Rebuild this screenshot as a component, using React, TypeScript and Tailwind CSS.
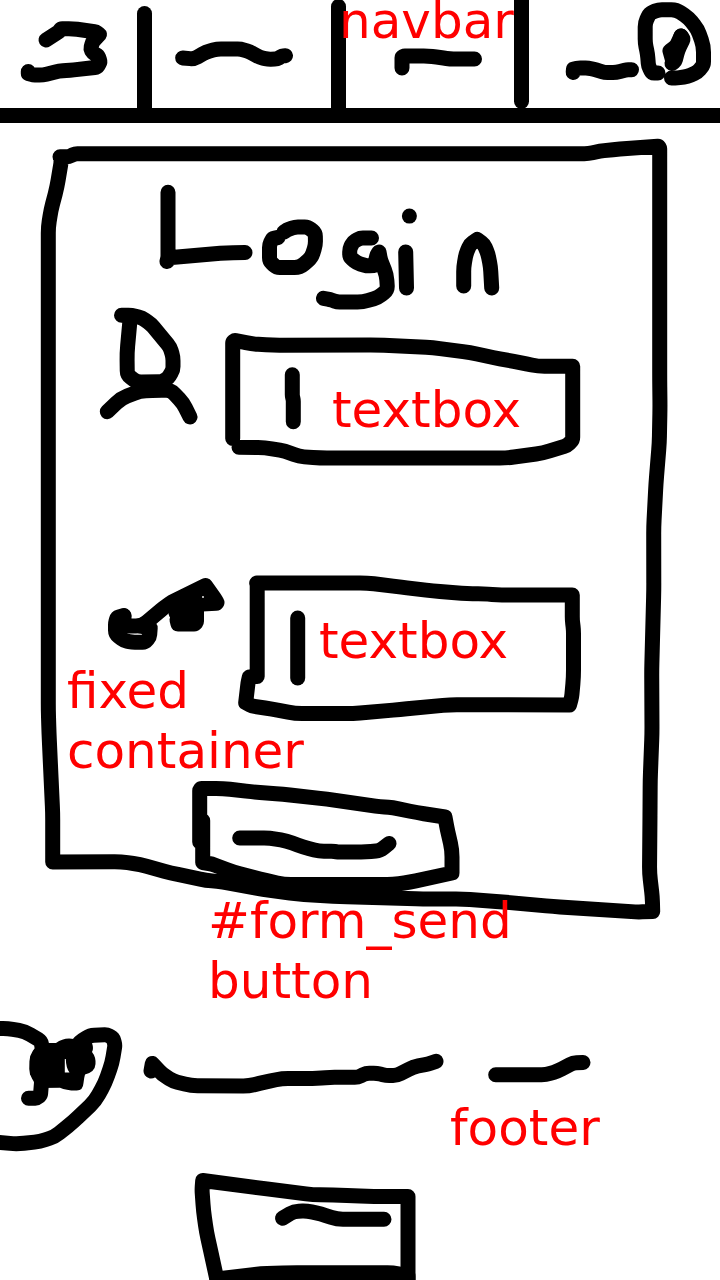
import type { ReactNode } from 'react';

type Point = [number, number];

const parse = (line: string): Point[] =>
  line.split(' ').map((pair) => pair.split(',').map(Number) as Point);

// Straight runs with gently rounded bends; sharp corners stay sharp.
function toPath(line: string): string {
  const pts = parse(line);
  let d = `M${pts[0][0]} ${pts[0][1]}`;
  for (let i = 1; i < pts.length - 1; i++) {
    const [a, b, c] = [pts[i - 1], pts[i], pts[i + 1]];
    const inLen = Math.hypot(b[0] - a[0], b[1] - a[1]) || 1;
    const outLen = Math.hypot(c[0] - b[0], c[1] - b[1]) || 1;
    const u: Point = [(b[0] - a[0]) / inLen, (b[1] - a[1]) / inLen];
    const v: Point = [(c[0] - b[0]) / outLen, (c[1] - b[1]) / outLen];
    const gentle = u[0] * v[0] + u[1] * v[1] > 0.4;
    const r = gentle ? Math.min(inLen * 0.35, outLen * 0.35, 7) : 0;
    d += `L${b[0] - u[0] * r} ${b[1] - u[1] * r}Q${b[0]} ${b[1]} ${b[0] + v[0] * r} ${b[1] + v[1] * r}`;
  }
  const end = pts[pts.length - 1];
  return `${d}L${end[0]} ${end[1]}`;
}

type SketchProps = { box: string; className: string; lines: string[]; children?: ReactNode };

function Sketch({ box, className, lines, children }: SketchProps) {
  return (
    <svg
      viewBox={box}
      className={`shrink-0 overflow-visible ${className}`}
      fill="none"
      stroke="black"
      strokeWidth={15}
      strokeLinecap="round"
      strokeLinejoin="round"
      aria-hidden="true"
    >
      {lines.map((line) => (
        <path key={line} d={toPath(line)} />
      ))}
      {children}
    </svg>
  );
}

function Note({
  className = '',
  leading = 'leading-[60px]',
  children,
}: {
  className?: string;
  leading?: string;
  children: ReactNode;
}) {
  return (
    <p
      className={`relative z-10 whitespace-nowrap font-['DejaVu_Sans',sans-serif] text-[50px] text-[#ff0000] ${leading} ${className}`}
    >
      {children}
    </p>
  );
}

function Navbar() {
  return (
    <header className="flex h-[123px] border-b-[15px] border-black">
      <Sketch
        box="0 0 137 108"
        className="h-[108px] w-[137px]"
        lines={[
          '46,40 59,31.5 61,28.7 73,28.7 96,32 99.5,34.5 92.5,42 90.7,49 93,53 98,55.5 100.3,62 97,67.3 70,70.3 59,71 43,75 33,75 28.3,73.5 28.3,71.5',
        ]}
      />
      <span className="mt-[6px] h-[109px] w-[15px] shrink-0 rounded-full bg-black" />
      <Sketch
        box="152 0 179 108"
        className="h-[108px] w-[179px]"
        lines={['182.7,58 194,59 206,52 217,49 241,49 250,52 260,57.5 268,59.2 277,59 282,56 285.5,55.7']}
      />
      <span className="-mt-px h-[116px] w-[15px] shrink-0 rounded-full bg-black" />
      <div className="flex h-[108px] w-[167.5px] shrink-0 flex-col">
        <Note className="-ml-[7px] -mt-[9px]">navbar</Note>
        <Sketch
          box="346 51 167.5 57"
          className="h-[57px] w-[167.5px]"
          lines={['402,68 402,57 404,56 428,56 440,57.5 450,59 474.5,59']}
        />
      </div>
      <span className="-mt-[8px] h-[117px] w-[15px] shrink-0 rounded-full bg-black" />
      <Sketch
        box="528.5 0 191.5 108"
        className="h-[108px] w-[191.5px]"
        lines={[
          '572.7,72.5 573,69 578,68 588,68 596,70 604,72.5 616,72.5 626,69.8 631,69.7',
          '657.5,73 651.5,73 648,66 647,54 644.7,43 644.7,23 649,13.5 658,9.7 676,9.7 688,18 697,29 703,46 703,65 697,72 687,76.5 677,78 671,78',
          '680.5,36 682.7,39 677.5,50 674.5,61 671.5,63.5',
          '680.5,36 676,46 669.5,51 672,60',
        ]}
      />
    </header>
  );
}

function LoginCard() {
  return (
    <section className="relative ml-10 mt-4 flex h-[749px] w-[628px] flex-col">
      <Sketch
        box="40 139 628 779"
        className="absolute left-0 top-0 h-[779px] w-[628px]"
        lines={[
          '60,156.7 69,156.7 75,153.7 588.5,153.7 600,151 620,149 658.5,146.2 659.7,148 659.7,380 660,407 659.3,443 656,483 653.7,527 653.8,590 651.7,670 652,733 650.2,780 650,813 649.5,873 652.3,897 652.7,911.5 637,912 553,906.5 503,902 463,899 423,899 340,896.6 297,894 263,889.5 223,882 206,880.3 171,873 140,864.5 121,861.7 52.7,862 52.7,813 50.7,770 49,733 48.3,710 48.3,227 51,210 57,187 61,163 61,157',
        ]}
      />

      <h1 className="ml-[120px] mt-[46px]" aria-label="Login">
        <Sketch
          box="160 185 340 123"
          className="h-[123px] w-[340px]"
          lines={[
            '168,192.3 168,257 167,261.5 170,257.7 226.7,252.7 245,252.5',
            '278,237.5 272.5,238.5 269.5,245 269.5,261 276.5,267.5 300,267.5 311.5,257.5 315.5,245 315.3,233 308,227 295,226.9 287,230 284,232',
            '371.5,238 360,238 353,242 349.7,249 349.7,257 357,263 367,266 374,265.5',
            '375,263 377,255 379,252 380.5,260 386.5,275 387.5,290 378,297.5 363,301.9 337,301.9 330,299.5 323.5,298.3',
            '405.7,252 406.5,288',
            '409.4,216 409.4,216.1',
            '463.7,286 463.7,267 466,254 470,244.5 477.3,239.5 484,244.5 488,254 490.5,267 491.7,288',
          ]}
        />
      </h1>

      <div className="flex h-[158px] pl-[60px]">
        <Sketch
          box="100 308 100 158"
          className="h-[158px] w-[100px]"
          lines={[
            '121.5,315.3 132,315.3 142,318 151,324 170,347 173,357 173,370 168,378 162,381.7 137,382 127.3,375 127,353 130,320',
            '107.3,411.7 121,398.5 140,391 157,390.3 171,390.3 183,403 190,417',
          ]}
        />
        <div className="relative ml-[25px] w-[356px]">
          <Sketch
            box="225 308 356 158"
            className="absolute inset-0 h-[158px] w-[356px]"
            lines={[
              '232.7,438.5 232.7,342 234.7,340.3 252,344 273,345.2 377,345 433,347.7 470,352.5 493,357.5 520,362.5 538,366.3 572.7,366.3 572.7,440 567,445.5 543,453 507,458 320,458 299,456.5 285,451 265,447.6 239,447.3',
              '292.3,374.7 292.3,396 293.3,400 293.3,421.7',
            ]}
          />
          <Note className="ml-[107px] mt-[72px]">textbox</Note>
        </div>
      </div>

      <div className="mt-[108px] flex h-[146px] pl-[67px]">
        <Sketch
          box="107 574 118 146"
          className="h-[146px] w-[118px]"
          lines={[
            '124,615.5 117,617.5 115.5,623 115.5,634 124,640.5 132,642.2 145,642.2 149.5,637 150.2,628',
            '124,616 124,626 142,626 164,607.5 172,602 205.5,585.5 215,599 217,602.5 216.5,603.3 202,604',
            '140,626 149,628',
            '177,620 178,624 195,624 196.5,622 196.5,610 178,610 176,613',
            '172,606 204,592 202,604 180,616',
          ]}
        >
          <path d="M170 602L205 586L216 603L197 608V624H178Z" fill="black" stroke="none" />
          <circle cx="203" cy="597" r="0.9" fill="white" stroke="none" />
        </Sketch>
        <div className="relative ml-[11px] w-[345px]">
          <Sketch
            box="236 574 345 146"
            className="absolute inset-0 h-[146px] w-[345px]"
            lines={[
              '257.2,676.5 257.2,585 256.7,583 367,582.9 400,587 433,591 467,593.7 483,593.7 497,595 572.3,595 572.3,620 573.5,630 573.5,677 571.7,697 569.5,704.9 450,704.7 400,709.5 353,713.6 295,713.6 272,709 252,706 245.7,702.7 248,683 249.3,677',
              '297.7,618 297.7,678',
            ]}
          />
          <Note className="ml-[83px] mt-[37px]">textbox</Note>
        </div>
      </div>

      <Note className="-mt-[59px] ml-[27px]">
        fixed
        <br />
        container
      </Note>

      <button type="button" className="ml-[152px] block h-[107px] w-[268px]" aria-label="Send">
        <Sketch
          box="192 781 268 107"
          className="h-[107px] w-[268px]"
          lines={[
            '199.7,842 199.7,790 201,788.4 223,788.4 253,792 283,794.2 327,799.2 380,806.7 393,807.7 417,812.7 445,817 447,828 452,850 452,873 410,882.2 393,884.5 284,884.5 260,879 233,872 212,864 202.7,862.5 202.7,820.5',
            '239.7,838 270,838 286.7,841 303,847 319,851.2 333,851.2 338,852 366,852 380,850.7 389,843.5',
            '225,872 250,881 290,889 370,890',
          ]}
        />
      </button>
    </section>
  );
}

function Footer() {
  return (
    <footer className="flex h-[269px] flex-col">
      <div className="mt-[7px] flex h-[140px]">
        <Sketch
          box="0 1018 143 140"
          className="h-[140px] w-[143px]"
          lines={[
            '-6,1028.5 8,1028.5 25,1031.5 41,1041 42.5,1050 37,1058 36.7,1072 41.7,1080 40.5,1095 37,1098.2 28.5,1098.2',
            '75,1049 80,1042 90,1035.3 107,1034.8 113,1038 115,1045 112,1063 105,1083 95,1101 73,1122 55,1136.5 40,1141.5 17,1144 -6,1142',
          ]}
        >
          <path
            d="M34 1050L48 1043L56 1043Q64 1037 74 1039L92 1043Q94 1049 92 1052Q96 1057 95.500 1064Q95 1072 85 1074.500Q84 1078 83.500 1083Q83 1091 76 1090.500Q66 1090.500 60 1087.700L40 1088L30 1074L30 1058Z M64.800 1059V1072.500H69.500Q66 1068 65.800 1059Z"
            fill="black"
            fillRule="evenodd"
            stroke="none"
          />
        </Sketch>
        <Sketch
          box="143 1018 307 140"
          className="h-[140px] w-[307px]"
          lines={[
            '151,1071 152.3,1063.5 162,1074 173,1081 191,1085.8 249,1086 265,1082 282,1078.5 317,1078.5 330,1077.3 358,1077.3 366,1073.2 377,1073.2 386,1075.5 397,1075.5 413,1067 428,1064 436,1061.3',
          ]}
        />
        <div className="flex flex-col">
          <Sketch
            box="450 1018 150 80"
            className="h-[80px] w-[150px]"
            lines={['495.7,1074.8 546,1074.8 558,1071 573,1063 583,1062.5']}
          />
          <Note>footer</Note>
        </div>
      </div>
      <Sketch
        box="194 1173 221 107"
        className="ml-[194px] mt-[15px] h-[107px] w-[221px]"
        lines={[
          '217,1280 212,1257 206.5,1232 203.5,1211 202,1190 202.7,1180.5 260,1188 313,1194.8 340,1195 367,1196.5 408,1196.5 408,1280',
          '217,1279 260,1273.8 290,1272.7 393,1272.7 408,1276 408,1281 217,1281',
          '282.5,1218.2 294,1211.3 307,1211 321,1214 337,1219.3 384,1219.3',
        ]}
      />
    </footer>
  );
}

export default function App() {
  return (
    <div className="flex h-[1280px] w-[720px] flex-col overflow-hidden bg-white">
      <Navbar />
      <main className="flex h-[888px] flex-col">
        <LoginCard />
        <Note className="ml-[208px] mt-[3px]">
          #form_send
          <br />
          button
        </Note>
      </main>
      <Footer />
    </div>
  );
}
